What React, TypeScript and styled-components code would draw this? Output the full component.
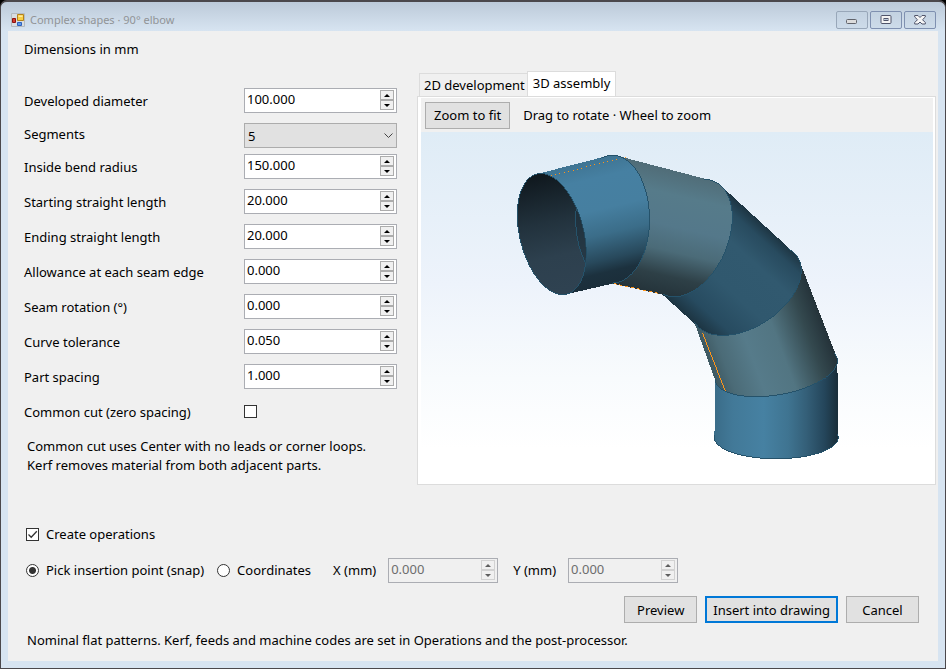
import React, { useId, useState } from "react";
import styled, { createGlobalStyle, css } from "styled-components";

const GlobalStyle = createGlobalStyle`
  *, *::before, *::after { box-sizing: border-box; }
  body { margin: 0; background: #000; }
  body, button, input, select {
    font-family: "Noto Sans", "Open Sans", sans-serif;
    font-size: 13px;
    line-height: 19px;
    color: #000;
  }
`;

/* ---------- window frame ---------- */

const Window = styled.div`
  display: flex;
  flex-direction: column;
  min-height: 100vh;
  padding: 0 7px 7px;
  border: 1px solid #4b484c;
  border-top-width: 2px;
  border-radius: 7px 7px 0 0;
  background: linear-gradient(#bccad9, #d7e4f1 29px);
`;

const TitleBar = styled.header`
  display: flex;
  align-items: center;
  height: 29px;
  padding: 6px 2px 0 3px;
`;

const AppIcon = styled.svg`
  width: 14px;
  height: 14px;
  margin-right: 5px;
`;

const Title = styled.h1`
  flex: 1;
  margin: 0;
  font-size: 11px;
  font-weight: 400;
  line-height: 19px;
  color: #919497;
`;

const WindowButtons = styled.div`
  display: flex;
  gap: 2px;
`;

const WindowButton = styled.button<{ $dim?: boolean }>`
  display: flex;
  align-items: center;
  justify-content: center;
  width: 32px;
  height: 18px;
  padding: 0;
  border: 1px solid ${(p) => (p.$dim ? "#98a7b9" : "#7f90b0")};
  border-radius: 2px;
  background: linear-gradient(#c3d2e1, #cddbe9);
`;

const Client = styled.main`
  display: flex;
  flex: 1;
  flex-direction: column;
  padding: 9px 2px 11px 16px;
  background: #f0f0f0;
`;

const Heading = styled.h2`
  margin: 0 0 24px;
  font-size: 13px;
  font-weight: 400;
  line-height: 19px;
`;

const Content = styled.div`
  display: flex;
  flex: 1;
  gap: 20px;
`;

/* ---------- parameter form ---------- */

const Parameters = styled.section`
  flex: none;
  width: 373px;
`;

const Row = styled.div<{ $compact?: boolean }>`
  display: grid;
  grid-template-columns: 220px minmax(0, 1fr);
  align-items: center;
  height: ${(p) => (p.$compact ? 31 : 35)}px;
`;

const RowLabel = styled.label`
  padding-top: 1px;
`;

const Note = styled.p`
  margin: 8px 0 0 3px;
`;

const SpinBox = styled.div<{ $disabled?: boolean }>`
  display: flex;
  height: 25px;
  padding: 1px;
  border: 1px solid #abadb3;
  background: ${(p) => (p.$disabled ? "#f0f0f0" : "#fff")};
`;

const SpinInput = styled.input`
  flex: 1;
  min-width: 0;
  height: 19px;
  padding: 0 1px;
  border: 0;
  outline: 0;
  background: transparent;
  &:disabled { color: #6d6d6d; }
`;

const SpinButtons = styled.div`
  display: flex;
  flex: none;
  flex-direction: column;
  width: 15px;
  padding: 0 1px 1px 0;
`;

const SpinButton = styled.button`
  display: flex;
  flex: 1;
  align-items: center;
  justify-content: center;
  padding: 0;
  border: 1px solid #acacac;
  background: #f0f0f0;
  color: #000;
  &:disabled { border-color: #d2d2d2; color: #5e5e5e; }
`;

const SelectWrap = styled.div`
  display: grid;
  align-items: center;
  margin-top: 4px;
  > * { grid-area: 1 / 1; }
  > svg { justify-self: end; margin-right: 4px; pointer-events: none; }
`;

const Select = styled.select`
  appearance: none;
  width: 100%;
  height: 25px;
  padding: 1px 3px 0;
  border: 1px solid #acacac;
  border-radius: 0;
  background: #e1e1e1;
`;

const tick = css`
  appearance: none;
  flex: none;
  width: 13px;
  height: 13px;
  margin: 0;
  border: 1px solid #333;
  background: #fff center / 11px 11px no-repeat;
`;

const CheckBox = styled.input.attrs({ type: "checkbox" })`
  ${tick}
  &:checked {
    background-image: url("data:image/svg+xml,%3Csvg xmlns='http://www.w3.org/2000/svg' viewBox='0 0 11 11'%3E%3Cpath d='M1.5 5.5l2.7 2.7L9.8 2.3' fill='none' stroke='%23333' stroke-width='1.3'/%3E%3C/svg%3E");
  }
`;

const Radio = styled.input.attrs({ type: "radio" })`
  ${tick}
  border-radius: 50%;
  &:checked { background-image: radial-gradient(circle, #333 3px, #fff 4px); }
`;

/* ---------- preview pane ---------- */

const Viewer = styled.section`
  display: flex;
  flex: 1;
  flex-direction: column;
  min-width: 0;
  margin-top: 31px;
`;

const TabList = styled.div`
  display: flex;
  align-items: flex-end;
  padding-left: 2px;
`;

const Tab = styled.button<{ $active?: boolean }>`
  height: ${(p) => (p.$active ? 26 : 23)}px;
  padding: ${(p) => (p.$active ? "0 5px 2px" : "0 2px 0 4px")};
  margin-bottom: ${(p) => (p.$active ? -1 : 0)}px;
  border: 1px solid #dcdcdc;
  border-bottom: 0;
  border-right-width: ${(p) => (p.$active ? 1 : 0)}px;
  background: ${(p) => (p.$active ? "#fff" : "#f0f0f0")};
  white-space: nowrap;
`;

const TabPanel = styled.div`
  display: flex;
  flex: 1;
  flex-direction: column;
  padding: 1px 2px 0 3px;
  border: 1px solid #dcdcdc;
  background: #fff;
`;

const ToolBar = styled.div`
  display: flex;
  align-items: center;
  gap: 13px;
  height: 34px;
  padding: 0 4px;
  background: #f0f0f0;
`;

const Button = styled.button<{ $primary?: boolean; $wide?: boolean }>`
  height: 27px;
  padding: 1px ${(p) => (p.$wide ? 8 : 6)}px 0;
  border: ${(p) => (p.$primary ? "2px solid #0078d7" : "1px solid #adadad")};
  background: #e1e1e1;
  white-space: nowrap;
`;

const Canvas = styled.div`
  display: flex;
  flex: 1;
  min-height: 300px;
  background: linear-gradient(#dfecf6, #edf3fb 43%, #f8fbfd 70%, #fff 90%);
  > svg { flex: 1; min-width: 0; }
`;

/* ---------- footer ---------- */

const Footer = styled.footer`
  padding-top: 37px;
`;

const Lines = styled.div`
  display: grid;
  gap: 11px;
`;

const Line = styled.div`
  display: flex;
  align-items: center;
  height: 25px;
  padding-left: 2px;
`;

const Choice = styled.label`
  display: flex;
  align-items: center;
  gap: 7px;
  margin-right: 13px;
`;

const FieldLabel = styled.label`
  margin: 0 12px 0 9px;
`;

const CoordinateField = styled.div`
  width: 110px;
  margin-right: 6px;
`;

const Actions = styled.div`
  display: flex;
  justify-content: flex-end;
  gap: 8px;
  margin: 13px 17px 8px 0;
  > button { min-width: 73px; }
`;

const FootNote = styled.p`
  margin: 0 0 0 3px;
`;

/* ---------- elbow geometry ---------- */

type Ring = { cx: number; cy: number; rx: number; ry: number; tilt: number };
type Point = [number, number];

const rings: Ring[] = [
  { cx: 552, cy: 234, rx: 62, ry: 32, tilt: 76 },
  { cx: 613, cy: 219, rx: 64, ry: 37, tilt: 90 },
  { cx: 690, cy: 238, rx: 62, ry: 38, tilt: -66 },
  { cx: 747, cy: 290, rx: 61, ry: 37, tilt: -33 },
  { cx: 777, cy: 370, rx: 62, ry: 25, tilt: -10 },
  { cx: 777, cy: 438, rx: 62, ry: 21, tilt: 0 },
];

const ringPoints = ({ cx, cy, rx, ry, tilt }: Ring): Point[] => {
  const a = (tilt * Math.PI) / 180;
  return Array.from({ length: 120 }, (_, i) => {
    const t = (i * Math.PI) / 60;
    const u = rx * Math.cos(t);
    const v = ry * Math.sin(t);
    return [cx + u * Math.cos(a) - v * Math.sin(a), cy + u * Math.sin(a) + v * Math.cos(a)];
  });
};

const hull = (points: Point[]): Point[] => {
  const sorted = [...points].sort((p, q) => p[0] - q[0] || p[1] - q[1]);
  const half = (list: Point[]) => {
    const out: Point[] = [];
    for (const p of list) {
      while (out.length > 1) {
        const [a, b] = [out[out.length - 2], out[out.length - 1]];
        if ((b[0] - a[0]) * (p[1] - a[1]) - (b[1] - a[1]) * (p[0] - a[0]) > 0) break;
        out.pop();
      }
      out.push(p);
    }
    return out.slice(0, -1);
  };
  return [...half(sorted), ...half(sorted.reverse())];
};

const toPath = (points: Point[]) =>
  "M" + points.map(([x, y]) => `${x.toFixed(1)} ${y.toFixed(1)}`).join("L") + "Z";

const inset = (ring: Ring): Ring => ({ ...ring, rx: ring.rx - 1, ry: ring.ry - 1 });

const shades = [
  { line: [590, 160, 619, 282], stops: ["0 #3f7492", ".15 #4680a2", ".4 #467fa0", ".6 #3b6d89", ".8 #28495c", ".9 #1c313e", "1 #1b2e3a"] },
  { line: [665, 167, 637, 288], stops: ["0 #506c77", ".2 #567b8a", ".45 #54788a", ".65 #4b6b78", ".85 #2e4047", "1 #25343b"] },
  { line: [677, 309, 760, 217], stops: ["0 #1c3340", ".15 #274b60", ".4 #30586e", ".7 #31596f", ".88 #284b5f", "1 #1b303c"] },
  { line: [705, 350, 818, 308], stops: ["0 #3e5962", ".12 #4b6b77", ".35 #567b8a", ".6 #527582", ".85 #34494f", "1 #25333a"] },
  { line: [715, 400, 838, 400], stops: ["0 #3a6c88", ".15 #427998", ".4 #4681a2", ".6 #3f7491", ".75 #345f78", ".9 #24455a", "1 #1a2f3b"] },
];

const edge = "#25526a";

const ElbowDrawing = () => (
  <svg viewBox="421 132 513 352" role="img" aria-label="90° elbow" shapeRendering="crispEdges">
    <defs>
      {shades.map(({ line: [x1, y1, x2, y2], stops }, i) => (
        <linearGradient key={i} id={`shade${i}`} gradientUnits="userSpaceOnUse" x1={x1} y1={y1} x2={x2} y2={y2}>
          {stops.map((s) => {
            const [offset, color] = s.split(" ");
            return <stop key={s} offset={offset} stopColor={color} />;
          })}
        </linearGradient>
      ))}
      <linearGradient id="inside" gradientUnits="userSpaceOnUse" x1="540" y1="176" x2="566" y2="290">
        <stop offset="0" stopColor="#10191f" />
        <stop offset=".4" stopColor="#22323d" />
        <stop offset=".7" stopColor="#2d404e" />
        <stop offset="1" stopColor="#2f4251" />
      </linearGradient>
      <clipPath id="opening">
        <path d={toPath(ringPoints(rings[0]))} />
      </clipPath>
    </defs>
    {[4, 3, 2, 1, 0].map((i) => (
      <g key={i} fill={`url(#shade${i})`}>
        <path d={toPath(hull([...ringPoints(rings[i]), ...ringPoints(rings[i + 1])]))} />
        <path d={toPath(ringPoints(rings[i + 1]))} stroke={edge} />
        <path d={toPath(hull([...ringPoints(rings[i]), ...ringPoints(inset(rings[i + 1]))]))} />
      </g>
    ))}
    <path d={toPath(ringPoints(rings[0]))} fill="url(#inside)" stroke={edge} />
    <path d={toPath(ringPoints(rings[1]))} fill="#1e303b" fillOpacity=".5" stroke={edge} clipPath="url(#opening)" />
    <g fill="none" stroke="#ff9418">
      <path d="M551 175.500L626 157" strokeDasharray="1 3.500" />
      <path d="M614 283.500L660 293.500" strokeDasharray="3 3" />
      <path d="M703 333L726 391.500" />
    </g>
  </svg>
);

/* ---------- parts ---------- */

type SpinnerProps = { id: string; initial: string; disabled?: boolean };

const Spinner = ({ id, initial, disabled }: SpinnerProps) => {
  const [value, setValue] = useState(initial);
  const step = (by: number) => setValue((v) => (Number(v) + by).toFixed(3));
  return (
    <SpinBox $disabled={disabled}>
      <SpinInput id={id} value={value} disabled={disabled} onChange={(e) => setValue(e.target.value)} />
      <SpinButtons>
        <SpinButton type="button" aria-label="Increase" disabled={disabled} onClick={() => step(1)}>
          <svg width="6" height="3" viewBox="0 0 6 3"><path d="M0 3L3 0L6 3Z" fill="currentColor" /></svg>
        </SpinButton>
        <SpinButton type="button" aria-label="Decrease" disabled={disabled} onClick={() => step(-1)}>
          <svg width="6" height="3" viewBox="0 0 6 3"><path d="M0 0L3 3L6 0Z" fill="currentColor" /></svg>
        </SpinButton>
      </SpinButtons>
    </SpinBox>
  );
};

const NumberRow = ({ label, value }: { label: string; value: string }) => {
  const id = useId();
  return (
    <Row>
      <RowLabel htmlFor={id}>{label}</RowLabel>
      <Spinner id={id} initial={value} />
    </Row>
  );
};

const lengths: [string, string][] = [
  ["Inside bend radius", "150.000"],
  ["Starting straight length", "20.000"],
  ["Ending straight length", "20.000"],
  ["Allowance at each seam edge", "0.000"],
  ["Seam rotation (°)", "0.000"],
  ["Curve tolerance", "0.050"],
  ["Part spacing", "1.000"],
];

export default function App() {
  const [placement, setPlacement] = useState("pick");
  const manual = placement === "coordinates";
  return (
    <>
      <GlobalStyle />
      <Window>
        <TitleBar>
          <AppIcon viewBox="0 0 14 14" aria-hidden="true">
            <path d="M.5 .5H13.500V13.500H.5Z" fill="#d8dde2" stroke="#b4babf" />
            <path d="M6.500 1.500H12.500V7.500H6.500Z" fill="#f9cf45" stroke="#b5831b" />
            <path d="M7.500 2.500H11.500V4H7.500Z" fill="#fdeaa0" />
            <path d="M1.500 5.500H4.500V9.500H1.500Z" fill="#d33a2e" stroke="#8e120f" />
            <path d="M6.500 9.500H10.500V12.500H6.500Z" fill="#5f9bea" stroke="#2e61bd" />
          </AppIcon>
          <Title>Complex shapes · 90° elbow</Title>
          <WindowButtons>
            <WindowButton type="button" aria-label="Minimize" $dim>
              <svg width="12" height="10" viewBox="0 0 12 10">
                <rect x=".5" y="4.500" width="10" height="4" rx="1" fill="#dcdcdc" stroke="#60636b" />
              </svg>
            </WindowButton>
            <WindowButton type="button" aria-label="Maximize">
              <svg width="12" height="10" viewBox="0 0 12 10">
                <rect x="1" y=".5" width="10" height="8" rx="1" fill="#f4f4f4" stroke="#50546a" />
                <rect x="4" y="3.500" width="4" height="2" fill="#b9c8da" stroke="#50546a" />
              </svg>
            </WindowButton>
            <WindowButton type="button" aria-label="Close">
              <svg width="12" height="10" viewBox="0 0 12 10">
                <path
                  d="M.7 .5H4L6 2.500L8 .5H11.300V2L8.500 4.700L11.300 7.500V9H8L6 7L4 9H.7V7.500L3.500 4.700L.7 2Z"
                  fill="#f6f6f6"
                  stroke="#50546a"
                />
              </svg>
            </WindowButton>
          </WindowButtons>
        </TitleBar>
        <Client>
          <Content>
            <Parameters>
              <Heading>Dimensions in mm</Heading>
              <NumberRow label="Developed diameter" value="100.000" />
              <Row $compact>
                <RowLabel htmlFor="segments">Segments</RowLabel>
                <SelectWrap>
                  <Select id="segments" defaultValue="5">
                    {[3, 4, 5, 6, 7, 8].map((n) => <option key={n}>{n}</option>)}
                  </Select>
                  <svg width="9" height="6" viewBox="0 0 9 6" aria-hidden="true">
                    <path d="M.5 .5L4.500 4.500L8.500 .5" fill="none" stroke="#444" />
                  </svg>
                </SelectWrap>
              </Row>
              {lengths.map(([label, value]) => <NumberRow key={label} label={label} value={value} />)}
              <Row>
                <RowLabel htmlFor="common-cut">Common cut (zero spacing)</RowLabel>
                <CheckBox id="common-cut" />
              </Row>
              <Note>
                Common cut uses Center with no leads or corner loops.
                <br />
                Kerf removes material from both adjacent parts.
              </Note>
            </Parameters>
            <Viewer>
              <TabList role="tablist">
                <Tab type="button" role="tab" aria-selected={false}>2D development</Tab>
                <Tab type="button" role="tab" aria-selected $active>3D assembly</Tab>
              </TabList>
              <TabPanel role="tabpanel">
                <ToolBar>
                  <Button type="button" $wide>Zoom to fit</Button>
                  <span>Drag to rotate · Wheel to zoom</span>
                </ToolBar>
                <Canvas><ElbowDrawing /></Canvas>
              </TabPanel>
            </Viewer>
          </Content>
          <Footer>
            <Lines>
              <Line>
                <Choice><CheckBox defaultChecked />Create operations</Choice>
              </Line>
              <Line>
                <Choice>
                  <Radio name="placement" checked={!manual} onChange={() => setPlacement("pick")} />
                  Pick insertion point (snap)
                </Choice>
                <Choice>
                  <Radio name="placement" checked={manual} onChange={() => setPlacement("coordinates")} />
                  Coordinates
                </Choice>
                <FieldLabel htmlFor="x">X (mm)</FieldLabel>
                <CoordinateField><Spinner id="x" initial="0.000" disabled={!manual} /></CoordinateField>
                <FieldLabel htmlFor="y">Y (mm)</FieldLabel>
                <CoordinateField><Spinner id="y" initial="0.000" disabled={!manual} /></CoordinateField>
              </Line>
            </Lines>
            <Actions>
              <Button type="button">Preview</Button>
              <Button type="button" $primary>Insert into drawing</Button>
              <Button type="button">Cancel</Button>
            </Actions>
            <FootNote>Nominal flat patterns. Kerf, feeds and machine codes are set in Operations and the post-processor.</FootNote>
          </Footer>
        </Client>
      </Window>
    </>
  );
}
